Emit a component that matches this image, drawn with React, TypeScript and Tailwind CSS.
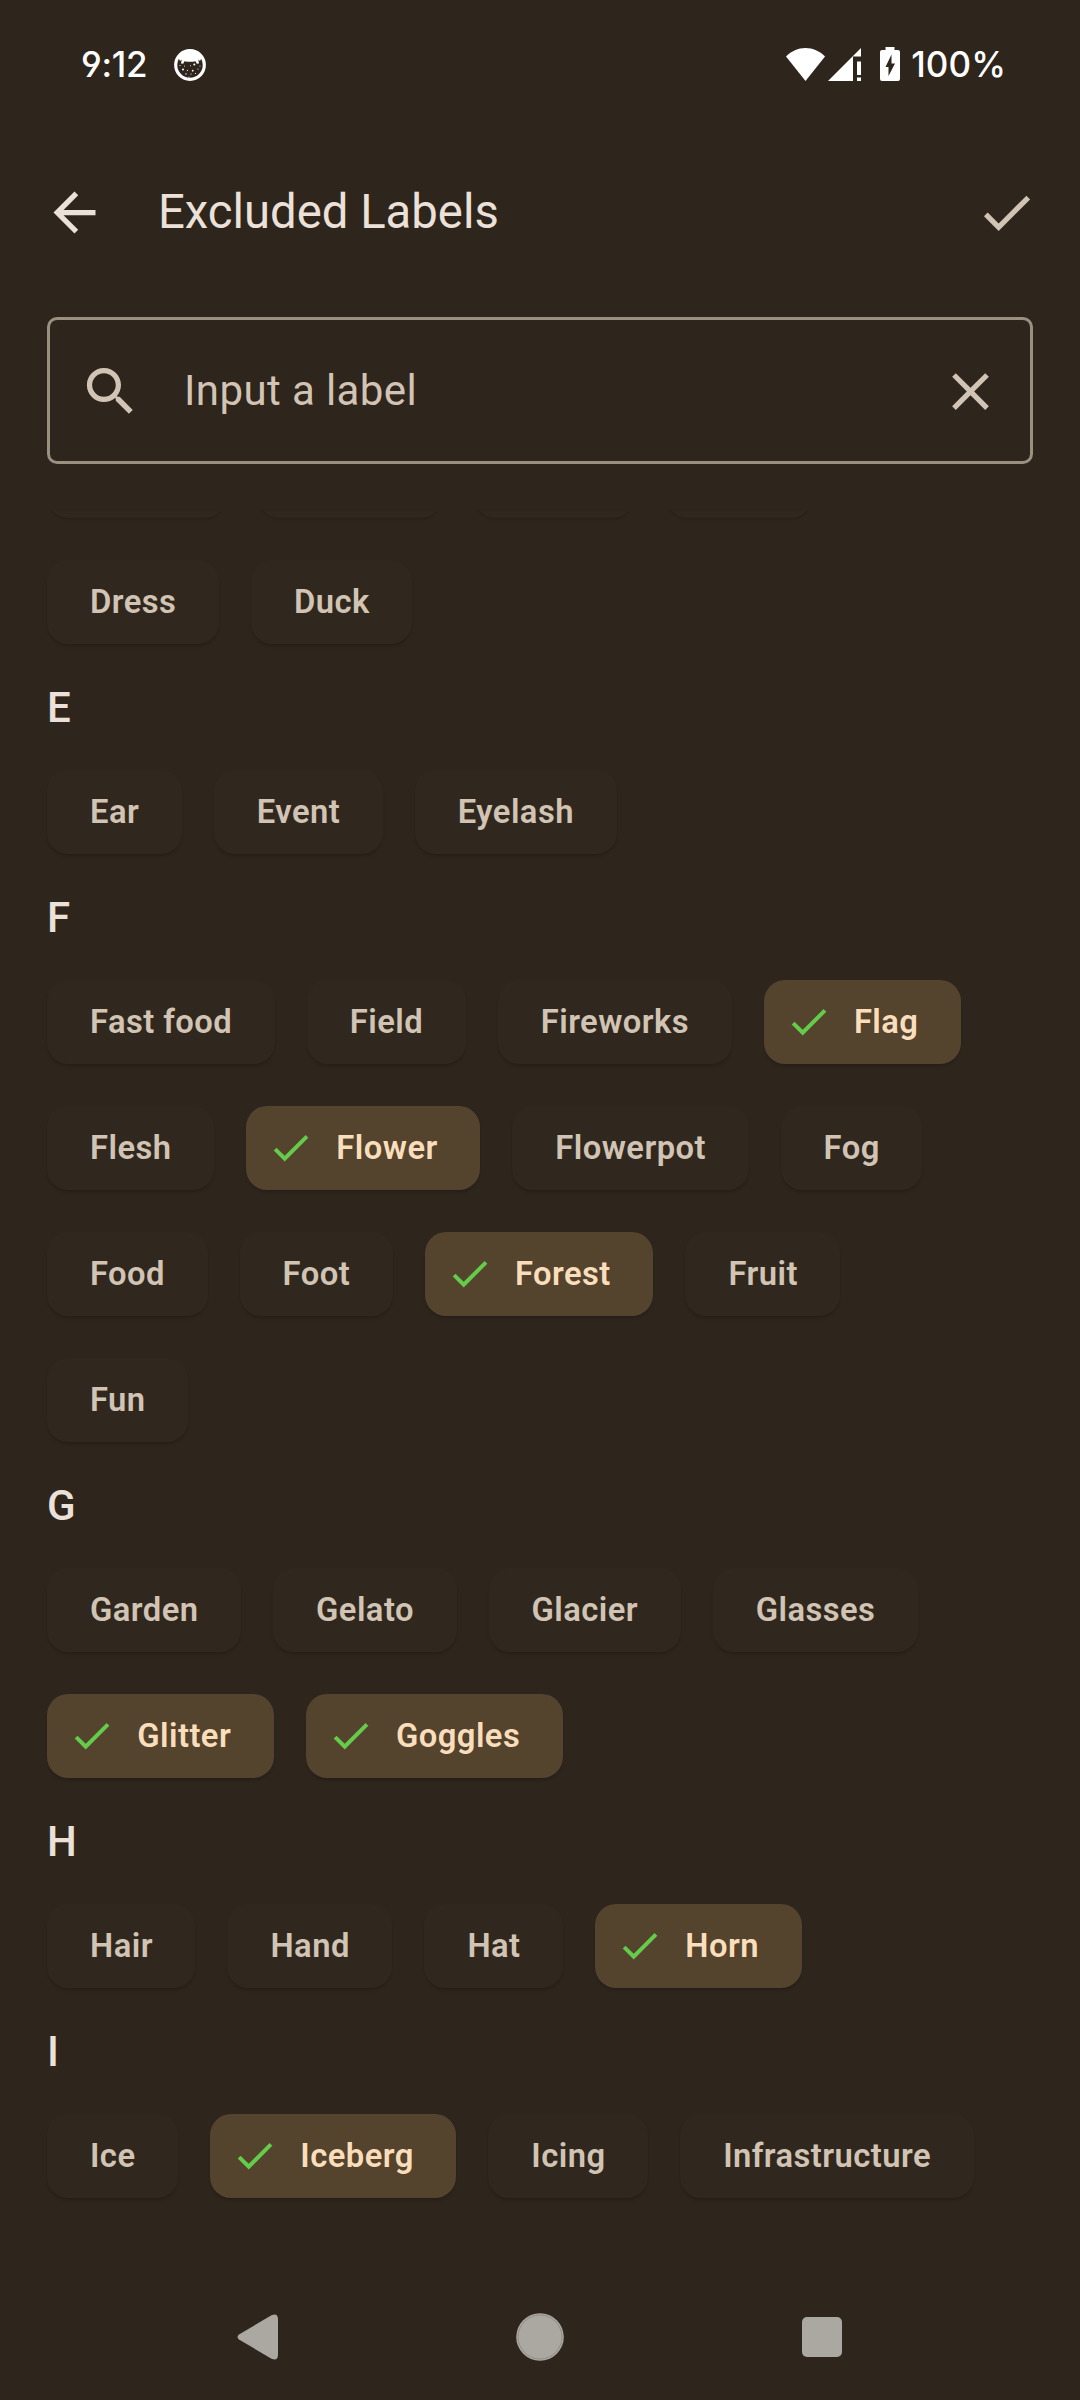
import React from "react";

type Chip = { label: string; selected?: boolean };
type Section = { letter: string; chips: Chip[] };

const sections: Section[] = [
  { letter: "E", chips: [{ label: "Ear" }, { label: "Event" }, { label: "Eyelash" }] },
  {
    letter: "F",
    chips: [
      { label: "Fast food" },
      { label: "Field" },
      { label: "Fireworks" },
      { label: "Flag", selected: true },
      { label: "Flesh" },
      { label: "Flower", selected: true },
      { label: "Flowerpot" },
      { label: "Fog" },
      { label: "Food" },
      { label: "Foot" },
      { label: "Forest", selected: true },
      { label: "Fruit" },
      { label: "Fun" },
    ],
  },
  {
    letter: "G",
    chips: [
      { label: "Garden" },
      { label: "Gelato" },
      { label: "Glacier" },
      { label: "Glasses" },
      { label: "Glitter", selected: true },
      { label: "Goggles", selected: true },
    ],
  },
  {
    letter: "H",
    chips: [{ label: "Hair" }, { label: "Hand" }, { label: "Hat" }, { label: "Horn", selected: true }],
  },
  {
    letter: "I",
    chips: [
      { label: "Ice" },
      { label: "Iceberg", selected: true },
      { label: "Icing" },
      { label: "Infrastructure" },
    ],
  },
];

const CHECK = "M9 16.17L4.83 12l-1.42 1.41L9 19 21 7l-1.41-1.41z";

function Icon({ d, className }: { d: string; className: string }) {
  return (
    <svg viewBox="0 0 24 24" fill="currentColor" className={className}>
      <path d={d} />
    </svg>
  );
}

function LabelChip({ label, selected }: Chip) {
  const base =
    "flex h-[84px] items-center rounded-[21px] pr-[42.6px] text-[32.75px] font-semibold tracking-[0.45px] whitespace-nowrap shadow-[0_3px_3px_-1px_rgba(0,0,0,0.18)]";
  return selected ? (
    <button className={`${base} gap-[22px] bg-[#54432d] pl-[21px] text-[#fadebc]`}>
      <Icon d={CHECK} className="size-[47.25px] text-[#64cb4b]" />
      <span className="pt-0.5">{label}</span>
    </button>
  ) : (
    <button className={`${base} bg-[#30281e] pl-[43px] text-[#d2c4b4]`}>
      <span className="pt-0.5">{label}</span>
    </button>
  );
}

function StatusBar() {
  return (
    <div className="flex h-[128px] items-center justify-between pr-[74px] pl-[81px] text-[35px] font-medium text-white">
      <div className="flex items-center gap-[27px] font-[Inter,sans-serif]">
        <span className="tracking-[-0.3px] [font-feature-settings:'cv03','cv04']">9:12</span>
        <svg viewBox="0 0 32 32" className="mt-px size-8">
          <circle cx="16" cy="16" r="14.3" fill="none" stroke="#fff" strokeWidth="3.2" />
          <path
            fill="#fff"
            d="M4 8Q9 1 16 1T28 8L26 12L24.300 10.500L25 14.500L22.800 14.800L21.500 12.200Q19 12.800 16 12.800T10.500 12.200L9.200 14.800L7 14.500L7.700 10.500L6 12Z"
          />
          <g fill="#fff">
            <circle cx="9" cy="20.500" r="1" />
            <circle cx="20.300" cy="15.600" r="1" />
            <circle cx="18.700" cy="21.700" r="0.900" />
            <circle cx="24" cy="20" r="0.600" />
            <circle cx="13.500" cy="21.500" r="0.600" />
            <circle cx="16.500" cy="16.800" r="0.500" />
            <circle cx="6" cy="16.500" r="0.600" />
            <circle cx="10.500" cy="17" r="0.500" />
            <circle cx="12" cy="25" r="0.700" />
            <circle cx="17" cy="25" r="0.600" />
            <circle cx="21.500" cy="24.500" r="0.600" />
            <circle cx="26" cy="17" r="0.500" />
            <circle cx="15" cy="28" r="0.500" />
          </g>
        </svg>
      </div>
      <div className="flex items-center">
        <svg viewBox="0 0 39 33" className="h-[33px] w-[39px]" fill="#fff">
          <path d="M19.500 33L0 8.500C5.500 3 12 0 19.500 0S33.500 3 39 8.500Z" />
        </svg>
        <svg viewBox="0 0 33 33" className="ml-[3px] h-[33px] w-[33px]" fill="#fff">
          <path d="M0 33L33 0V8.500H25V33ZM29 13.500H33V27H29ZM29 29.500H33V33H29Z" />
        </svg>
        <svg viewBox="0 0 20 34" className="ml-[19px] h-[34px] w-5">
          <path
            fill="#fff"
            d="M5.500 0H14.500V3H18Q20 3 20 5V32Q20 34 18 34H2Q0 34 0 32V5Q0 3 2 3H5.500Z"
          />
          <path fill="#2e251d" d="M11.500 7.500V16.500H15L8.500 29V20H5.500Z" />
        </svg>
        <span className="ml-[11px] font-[Inter,sans-serif] tracking-[0.1px]">100%</span>
      </div>
    </div>
  );
}

export default function App() {
  return (
    <div className="flex h-[2400px] w-[1080px] flex-col overflow-hidden bg-[#2e251d] font-[Roboto,sans-serif]">
      <StatusBar />

      <header className="flex h-[169px] items-center pr-[42px] pl-[43px] text-[#ebe1d9]">
        <Icon d="M20 11H7.830l5.590-5.590L12 4l-8 8 8 8 1.410-1.410L7.830 13H20v-2z" className="size-[63px]" />
        <h1 className="mb-px ml-[52px] flex-1 text-[47.25px] leading-[56px]">Excluded Labels</h1>
        <Icon d={CHECK} className="size-[63px] text-[#d2c4b4]" />
      </header>

      <div className="mx-[47px] mt-5 flex h-[147px] shrink-0 items-center rounded-[10px] border-3 border-[#9b8f80] pt-px pr-[28px] pl-[29px] text-[#d2c4b4]">
        <Icon
          d="M15.500 14h-.790l-.280-.270C15.410 12.590 16 11.110 16 9.500 16 5.910 13.090 3 9.500 3S3 5.910 3 9.500 5.910 16 9.500 16c1.610 0 3.090-.590 4.230-1.570l.270.280v.790l5 4.990L20.490 19l-4.990-5zm-6 0C7.010 14 5 11.990 5 9.500S7.010 5 9.500 5 14 7.010 14 9.500 11.990 14 9.500 14z"
          className="size-[63px]"
        />
        <span className="mb-0.5 ml-[42px] flex-1 text-[42px] tracking-[0.4px]">Input a label</span>
        <Icon
          d="M19 6.410L17.590 5 12 10.590 6.410 5 5 6.410 10.590 12 5 17.590 6.410 19 12 13.410 17.590 19 19 17.590 13.410 12z"
          className="size-[63px]"
        />
      </div>

      <main className="mt-[47px] h-[1740px] overflow-hidden pr-[79px] pl-[47px]">
        <div className="-mt-[77px]">
          <div className="mb-[42px] flex gap-8">
            <div className="h-[84px] w-[179px] rounded-[21px] bg-[#30281e] shadow-[0_2px_2px_-1px_rgba(0,0,0,0.18)]" />
            <div className="h-[84px] w-[184px] rounded-[21px] bg-[#30281e] shadow-[0_2px_2px_-1px_rgba(0,0,0,0.18)]" />
            <div className="h-[84px] w-[160px] rounded-[21px] bg-[#30281e] shadow-[0_2px_2px_-1px_rgba(0,0,0,0.18)]" />
            <div className="h-[84px] w-[146px] rounded-[21px] bg-[#30281e] shadow-[0_2px_2px_-1px_rgba(0,0,0,0.18)]" />
          </div>
          <div className="flex gap-8">
            <LabelChip label="Dress" />
            <LabelChip label="Duck" />
          </div>
          {sections.map((s) => (
            <section key={s.letter}>
              <h2 className="flex h-[126px] items-center text-[42px] font-medium text-[#ebe1d9]">{s.letter}</h2>
              <div className="flex flex-wrap gap-x-8 gap-y-[42px]">
                {s.chips.map((c) => (
                  <LabelChip key={c.label} {...c} />
                ))}
              </div>
            </section>
          ))}
        </div>
      </main>

      <nav className="mt-auto flex h-[126px] shrink-0 items-center justify-between pr-[238px] pl-[237px]">
        <svg viewBox="0 0 41 46" className="h-[46px] w-[41px]" fill="#aba7a1">
          <path d="M2 20.500L34.500 1.200Q41 -1.500 41 5.500V40.500Q41 47.500 34.500 44.800L2 25.500Q-1 23 2 20.500Z" />
        </svg>
        <svg viewBox="0 0 48 48" className="size-12">
          <circle cx="24" cy="24" r="23.800" fill="#aba7a1" />
          <circle cx="24" cy="24" r="22" fill="none" stroke="#857f78" strokeWidth="0.700" />
        </svg>
        <div className="h-10 w-[40px] rounded-[5px] bg-[#aba7a1]" />
      </nav>
    </div>
  );
}
